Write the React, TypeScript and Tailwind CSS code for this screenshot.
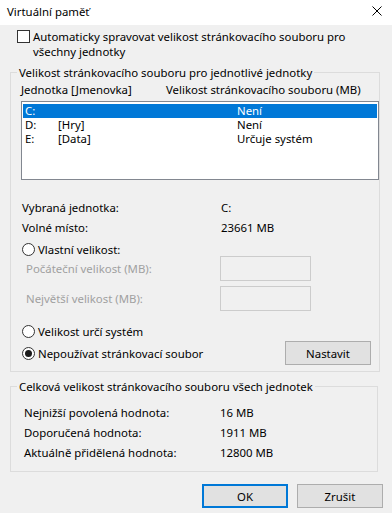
import React from "react";

const font = { fontFamily: '"Noto Sans", "Open Sans", sans-serif' };

function CheckBox() {
  return <span className="mt-[1px] block h-[13px] w-[13px] shrink-0 border border-[#333333] bg-white" />;
}

function Radio({ checked }: { checked?: boolean }) {
  return (
    <span className="flex h-[13px] w-[13px] shrink-0 items-center justify-center rounded-full border border-[#333333] bg-white">
      {checked && <span className="block h-[7px] w-[7px] rounded-full bg-[#1a1a1a]" />}
    </span>
  );
}

function WinButton({ children, primary }: { children: React.ReactNode; primary?: boolean }) {
  return (
    <button
      className={
        primary
          ? "flex h-[24px] w-[86px] items-center justify-center border-2 border-[#0078d7] bg-[#e1e1e1] text-[11.4px] text-black"
          : "flex h-[24px] w-[86px] items-center justify-center border border-[#adadad] bg-[#e1e1e1] text-[11.4px] text-black"
      }
    >
      {children}
    </button>
  );
}

const drives = [
  { letter: "C:", label: "", size: "Není", selected: true },
  { letter: "D:", label: "[Hry]", size: "Není", selected: false },
  { letter: "E:", label: "[Data]", size: "Určuje systém", selected: false },
];

const totals = [
  ["Nejnižší povolená hodnota:", "16 MB"],
  ["Doporučená hodnota:", "1911 MB"],
  ["Aktuálně přidělená hodnota:", "12800 MB"],
];

export default function App() {
  return (
    <div style={font} className="h-[513px] w-[392px] overflow-hidden bg-[#f0f0f0] text-[11.4px] leading-[15px] text-black">
      {/* title bar */}
      <div className="flex h-[25px] items-start justify-between bg-white pl-[7px] pt-[4px]">
        <span>Virtuální paměť</span>
        <svg width="10" height="10" viewBox="0 0 10 10" className="mr-[10px] mt-[2px]">
          <path d="M0.5 0.5 L9.5 9.5 M9.5 0.5 L0.5 9.5" stroke="#000" strokeWidth="1" />
        </svg>
      </div>

      {/* auto manage */}
      <div className="mt-[4px] flex gap-[3px] pl-[17px]">
        <CheckBox />
        <span>
          Automaticky spravovat velikost stránkovacího souboru pro
          <br />
          všechny jednotky
        </span>
      </div>

      {/* per-drive group */}
      <fieldset className="ml-[10px] mt-[6px] w-[368px] border border-[#dcdcdc] pb-[6px] pl-[10px]">
        <legend className="-ml-[4px] px-[2px] leading-[15px]">Velikost stránkovacího souboru pro jednotlivé jednotky</legend>
        <div className="mt-[2px] flex h-[15px]">
          <span className="w-[145px]">Jednotka [Jmenovka]</span>
          <span>Velikost stránkovacího souboru (MB)</span>
        </div>
        <div className="mt-[4px] h-[79px] w-[358px] border border-[#828790] bg-white px-[1px] pt-[2px]">
          {drives.map((d) => (
            <div
              key={d.letter}
              className={
                d.selected
                  ? "flex h-[14px] items-center bg-[#0078d7] pl-[2px] leading-[14px] text-white"
                  : "flex h-[14px] items-center pl-[2px] leading-[14px]"
              }
            >
              <span className="w-[33px]">{d.letter}</span>
              <span className="w-[179px]">{d.label}</span>
              <span>{d.size}</span>
            </div>
          ))}
        </div>

        <div className="mt-[20px] flex h-[15px] pl-[1px]">
          <span className="w-[199px]">Vybraná jednotka:</span>
          <span>C:</span>
        </div>
        <div className="mt-[5px] flex h-[15px] pl-[1px]">
          <span className="w-[199px]">Volné místo:</span>
          <span>23661 MB</span>
        </div>
        <div className="mt-[7px] flex h-[14px] items-center gap-[3px] pl-[1px]">
          <Radio />
          <span>Vlastní velikost:</span>
        </div>
        <div className="flex h-[25px] items-center pl-[5px]">
          <span className="w-[194px] text-[#a0a0a0]">Počáteční velikost (MB):</span>
          <span className="block h-[25px] w-[91px] border border-[#cccccc]" />
        </div>
        <div className="mt-[5px] flex h-[25px] items-center pl-[5px]">
          <span className="w-[194px] text-[#a0a0a0]">Největší velikost (MB):</span>
          <span className="block h-[25px] w-[91px] border border-[#cccccc]" />
        </div>
        <div className="mt-[13px] flex h-[15px] items-center gap-[3px] pl-[1px]">
          <Radio />
          <span>Velikost určí systém</span>
        </div>
        <div className="mt-[2px] flex h-[24px] items-center gap-[3px] pl-[1px]">
          <Radio checked />
          <span>Nepoužívat stránkovací soubor</span>
          <div className="ml-auto mr-[8px]">
            <WinButton>Nastavit</WinButton>
          </div>
        </div>
      </fieldset>

      {/* totals group */}
      <fieldset className="ml-[10px] mt-[7px] w-[368px] border border-[#dcdcdc] pb-[9px] pl-[13px]">
        <legend className="-ml-[7px] px-[2px] leading-[15px]">Celková velikost stránkovacího souboru všech jednotek</legend>
        <div className="mt-[8px] flex flex-col">
          {totals.map(([k, v]) => (
            <div key={k} className="flex h-[20px] items-center">
              <span className="w-[196px]">{k}</span>
              <span>{v}</span>
            </div>
          ))}
        </div>
      </fieldset>

      <div className="mt-[12px] flex justify-end gap-[9px] pr-[9px]">
        <WinButton primary>OK</WinButton>
        <WinButton>Zrušit</WinButton>
      </div>
    </div>
  );
}
